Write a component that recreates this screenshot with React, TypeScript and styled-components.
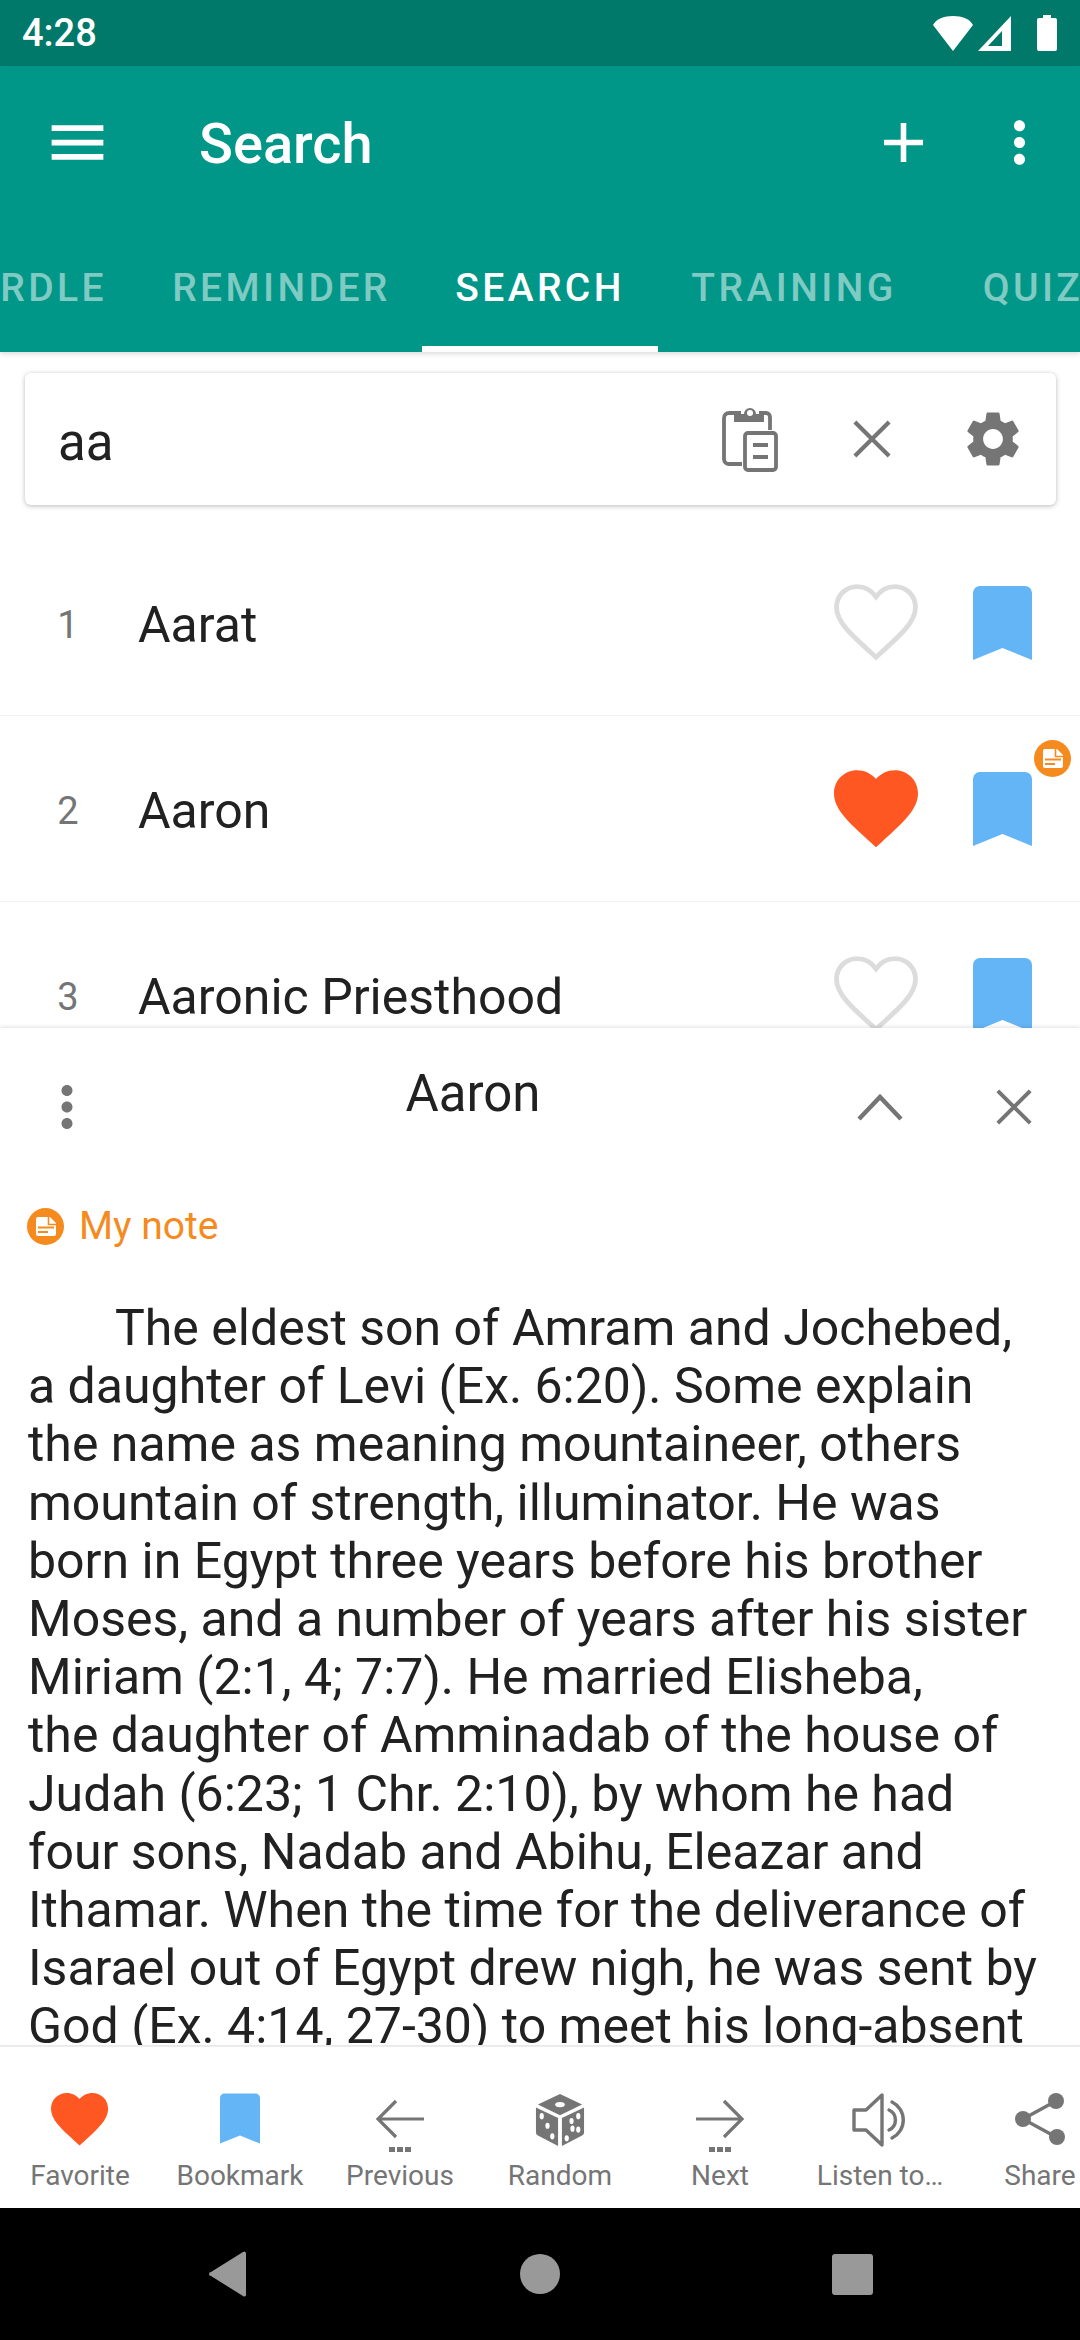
import React from "react";
import styled, { createGlobalStyle } from "styled-components";

const GlobalStyle = createGlobalStyle`
  html, body {
    margin: 0;
    padding: 0;
    background: #fff;
  }
  * {
    box-sizing: border-box;
  }
`;

const Screen = styled.div`
  width: 1080px;
  height: 2340px;
  display: flex;
  flex-direction: column;
  overflow: hidden;
  background: #fff;
  font-family: Roboto, "Noto Sans", sans-serif;
  color: #212121;
`;

const StatusBar = styled.div`
  height: 66px;
  flex: none;
  display: flex;
  align-items: center;
  justify-content: space-between;
  padding: 0 23px 0 22px;
  background: #00796b;
  color: #fff;
  font-size: 38px;
  font-weight: 500;
`;

const StatusIcons = styled.div`
  display: flex;
  align-items: center;
  gap: 5px;

  > svg:last-child {
    margin-left: 21px;
  }
`;

const AppBar = styled.header`
  flex: none;
  background: #009688;
  color: #fff;
  position: relative;
  z-index: 2;
  box-shadow: 0 2px 5px rgba(0, 0, 0, 0.14);
`;

const Toolbar = styled.div`
  height: 154px;
  display: flex;
  align-items: center;
  padding-bottom: 2px;
  padding-right: 3px;
`;

const BarButton = styled.div<{ $w: number }>`
  width: ${(p) => p.$w}px;
  flex: none;
  display: flex;
  align-items: center;
  justify-content: center;
`;

const Title = styled.h1`
  flex: 1;
  margin: 0 0 0 45px;
  font-size: 56px;
  font-weight: 500;
  padding-top: 4px;
`;

const Tabs = styled.nav`
  height: 132px;
  display: flex;
  overflow: hidden;
`;

const Tab = styled.div<{ $active?: boolean; $w: number; $cut?: boolean }>`
  width: ${(p) => p.$w}px;
  flex: none;
  display: flex;
  align-items: center;
  justify-content: ${(p) => (p.$cut ? "flex-end" : "center")};
  padding: 9px ${(p) => (p.$cut ? "34px" : "0")} 0 0;
  font-size: 39px;
  font-weight: 500;
  letter-spacing: 3.4px;
  white-space: nowrap;
  color: ${(p) => (p.$active ? "#fff" : "rgba(255, 255, 255, 0.5)")};
  border-bottom: 6px solid ${(p) => (p.$active ? "#fff" : "transparent")};
`;

const ListArea = styled.main`
  flex: 1;
  min-height: 0;
  overflow: hidden;
  padding-top: 21px;
  background: #fff;
`;

const SearchCard = styled.div`
  height: 132px;
  margin: 0 24px 25px 25px;
  display: flex;
  align-items: center;
  border-radius: 6px;
  background: #fff;
  box-shadow: 0 1px 5px rgba(0, 0, 0, 0.28);
`;

const SearchText = styled.div`
  flex: 1;
  padding: 6px 0 0 33px;
  font-size: 51px;
`;

const Row = styled.div`
  height: 186px;
  display: flex;
  align-items: center;
  border-bottom: 1px solid #f2f2f2;
`;

const RowNumber = styled.div`
  width: 138px;
  flex: none;
  padding: 5px 2px 0 0;
  text-align: center;
  font-size: 38px;
  color: #757575;
`;

const RowName = styled.div`
  flex: 1;
  padding-top: 5px;
  font-size: 50px;
`;

const RowIcon = styled.div<{ $w: number }>`
  position: relative;
  width: ${(p) => p.$w}px;
  flex: none;
  display: flex;
  justify-content: center;
  margin-top: 1px;
`;

const NoteBadge = styled.div`
  position: absolute;
  top: -32px;
  right: -5px;
  display: flex;
`;

const Panel = styled.section`
  height: 1017px;
  flex: none;
  display: flex;
  flex-direction: column;
  overflow: hidden;
  position: relative;
  background: #fff;
  box-shadow: 0 -1px 4px rgba(0, 0, 0, 0.12);
`;

const PanelHeader = styled.div`
  height: 156px;
  flex: none;
  display: flex;
  padding-top: 2px;
  align-items: center;
`;

const PanelTitle = styled.div`
  flex: 1;
  text-align: center;
  font-size: 51px;
  margin-top: -28px;
`;

const NoteLink = styled.div`
  flex: none;
  display: flex;
  align-items: center;
  gap: 15px;
  height: 84px;
  padding-left: 27px;
  color: #f58b1f;
  font-size: 39px;
`;

const Article = styled.article`
  flex: 1;
  min-height: 0;
  overflow: hidden;
  padding: 31px 0 0 28px;
  font-size: 50px;
  line-height: 58.2px;
  color: #212121;
`;

const ArticleLine = styled.div<{ $indent?: boolean }>`
  white-space: nowrap;
  padding-left: ${(p) => (p.$indent ? "87px" : "0")};
`;

const BottomBar = styled.div`
  height: 163px;
  flex: none;
  display: grid;
  grid-template-columns: repeat(7, 160px);
  overflow: hidden;
  background: #fff;
  border-top: 2px solid #f0f0f0;
`;

const BottomItem = styled.div`
  display: flex;
  flex-direction: column;
  align-items: center;
  padding-top: 46px;
  color: #757575;
  font-size: 28px;
  white-space: nowrap;
`;

const BottomIcon = styled.div`
  height: 60px;
  display: flex;
  align-items: flex-start;
  justify-content: center;
`;

const BottomLabel = styled.div`
  margin-top: 5px;
  line-height: 36px;
`;

const NavBar = styled.div`
  height: 132px;
  flex: none;
  background: #000;
  display: flex;
  align-items: center;
  justify-content: center;
`;

const NavCell = styled.div`
  width: 312px;
  display: flex;
  justify-content: center;
`;

const GREY = "#757575";

const MoreIcon = ({ fill, size }: { fill: string; size: number }) => (
  <svg width={size} height={size} viewBox="0 0 24 24" fill={fill}>
    <path d="M12 8c1.1 0 2-.9 2-2s-.9-2-2-2-2 .9-2 2 .9 2 2 2zm0 2c-1.1 0-2 .9-2 2s.9 2 2 2 2-.9 2-2-.9-2-2-2zm0 6c-1.1 0-2 .9-2 2s.9 2 2 2 2-.9 2-2-.9-2-2-2z" />
  </svg>
);

const CloseIcon = ({ size }: { size: number }) => (
  <svg width={size} height={size} viewBox="0 0 40 40" stroke={GREY} strokeWidth="4.4" fill="none">
    <path d="M2 2l36 36M38 2L2 38" />
  </svg>
);

const GearIcon = () => (
  <svg width="66" height="66" viewBox="0 0 24 24" fill={GREY}>
    <path d="M19.14 12.94c.04-.3.06-.61.06-.94 0-.32-.02-.64-.07-.94l2.03-1.58c.18-.14.23-.41.12-.61l-1.92-3.32c-.12-.22-.37-.29-.59-.22l-2.39.96c-.5-.38-1.03-.7-1.62-.94l-.36-2.54c-.04-.24-.24-.41-.48-.41h-3.84c-.24 0-.43.17-.47.41l-.36 2.54c-.59.24-1.13.57-1.62.94l-2.39-.96c-.22-.08-.47 0-.59.22L2.74 8.87c-.12.21-.08.47.12.61l2.03 1.58c-.05.3-.09.63-.09.94s.02.64.07.94l-2.03 1.58c-.18.14-.23.41-.12.61l1.92 3.32c.12.22.37.29.59.22l2.39-.96c.5.38 1.03.7 1.62.94l.36 2.54c.05.24.24.41.48.41h3.84c.24 0 .44-.17.47-.41l.36-2.54c.59-.24 1.13-.56 1.62-.94l2.39.96c.22.08.47 0 .59-.22l1.92-3.32c.12-.22.07-.47-.12-.61l-2.01-1.58zM12 15.6c-1.98 0-3.6-1.62-3.6-3.6s1.62-3.6 3.6-3.6 3.6 1.62 3.6 3.6-1.62 3.6-3.6 3.6z" />
  </svg>
);

const ClipboardIcon = () => (
  <svg width="56" height="66" viewBox="0 0 56 66" fill="none" stroke={GREY} strokeWidth="3.8">
    <path d="M19 7H7a5 5 0 0 0-5 5v41a5 5 0 0 0 5 5h13M37 7h7a4 4 0 0 1 4 4v13" />
    <path d="M12 16V8h10a6 6 0 0 1 12 0h8v8z" fill={GREY} stroke="none" />
    <circle cx="28" cy="7" r="3" fill="#fff" stroke="none" />
    <rect x="23" y="27" width="31" height="37" rx="3" />
    <path d="M31 39h15M31 51h15" />
  </svg>
);

const HeartPath =
  "M12 21.35l-1.45-1.32C5.4 15.36 2 12.28 2 8.5 2 5.42 4.42 3 7.5 3c1.74 0 3.41.81 4.5 2.09C13.09 3.81 14.76 3 16.5 3 19.58 3 22 5.42 22 8.5c0 3.78-3.4 6.86-8.55 11.54L12 21.35z";

const HeartIcon = ({ filled, size }: { filled?: boolean; size: number }) => (
  <svg
    width={size * 0.84}
    height={size * 0.78}
    viewBox="2 3 20 18.5"
    style={{ overflow: "visible", display: "block" }}
  >
    {filled ? (
      <path d={HeartPath} fill="#ff5722" />
    ) : (
      <path
        d="M12 20.4l-1.1-1C5.9 14.9 2.6 11.9 2.6 8.5c0-2.8 2.2-4.9 4.9-4.9 1.7 0 3.4.9 4.5 2.4 1.1-1.5 2.8-2.4 4.5-2.4 2.7 0 4.9 2.1 4.9 4.9 0 3.4-3.3 6.4-8.3 10.9z"
        fill="none"
        stroke="#dcdcdc"
        strokeWidth="1.15"
      />
    )}
  </svg>
);

const BookmarkIcon = ({ w, h }: { w: number; h: number }) => (
  <svg width={w} height={h} viewBox="0 0 59 74" fill="#64b5f6" style={{ display: "block" }}>
    <path d="M0 7a7 7 0 0 1 7-7h45a7 7 0 0 1 7 7v67L29.5 62 0 74z" />
  </svg>
);

const NoteIcon = ({ size }: { size: number }) => (
  <svg width={size} height={size} viewBox="0 0 37 37" style={{ display: "block" }}>
    <circle cx="18.5" cy="18.5" r="18.5" fill="#f58b1f" />
    <path d="M9 11a2 2 0 0 1 2-2h12l6 6v11a2 2 0 0 1-2 2H11a2 2 0 0 1-2-2z" fill="#fff" />
    <path d="M21.5 9v7.5H29" fill="none" stroke="#f58b1f" strokeWidth="1.6" />
    <path d="M11 19.5h16M11 24h10" stroke="#f58b1f" strokeWidth="2.2" />
  </svg>
);

const ArrowIcon = ({ flip }: { flip?: boolean }) => (
  <svg width="52" height="60" viewBox="0 -6 52 60" fill="none" stroke={GREY} style={{ display: "block" }}>
    <g transform={flip ? "translate(52 0) scale(-1 1)" : undefined} strokeWidth="3.2">
      <path d="M50 20H5M22 2L4 20l18 18" />
    </g>
    <path d="M15 48h6v5h-6zM23 48h6v5h-6zM31 48h6v5h-6z" fill={GREY} stroke="none" />
  </svg>
);

const DiceIcon = () => (
  <svg width="50" height="54" viewBox="0 0 52 56" fill={GREY} style={{ display: "block" }}>
    <path d="M26 1l23 11-23 11L3 12z" />
    <path d="M1 15l23 11v29L3 44a3 3 0 0 1-2-3z" />
    <path d="M51 15L28 26v29l21-11a3 3 0 0 0 2-3z" />
    <ellipse cx="26" cy="12" rx="5" ry="2.8" fill="#fff" />
    <ellipse cx="7" cy="24" rx="2.2" ry="3.2" fill="#fff" />
    <ellipse cx="13" cy="34" rx="2.2" ry="3.2" fill="#fff" />
    <ellipse cx="18" cy="45" rx="2.2" ry="3.2" fill="#fff" />
    <ellipse cx="45" cy="24" rx="2.2" ry="3.2" fill="#fff" />
    <ellipse cx="38" cy="29" rx="2.2" ry="3.2" fill="#fff" />
    <ellipse cx="39" cy="37" rx="2.2" ry="3.2" fill="#fff" />
    <ellipse cx="33" cy="47" rx="2.2" ry="3.2" fill="#fff" />
    <ellipse cx="45" cy="38" rx="2.2" ry="3.2" fill="#fff" />
  </svg>
);

const SpeakerIcon = () => (
  <svg width="56" height="54" viewBox="0 0 56 54" fill="none" stroke={GREY} strokeWidth="3.4" strokeLinejoin="round" strokeLinecap="round" style={{ display: "block" }}>
    <path d="M30 2v50L14 37H2V17h12z" />
    <path d="M37 17a11 11 0 0 1 0 20M40 9a20 20 0 0 1 0 36" />
  </svg>
);

const ShareIcon = () => (
  <svg width="50" height="52" viewBox="0 0 50 52" fill={GREY} style={{ display: "block" }}>
    <path d="M8 26L41 8M8 26l33 18" stroke={GREY} strokeWidth="3.4" />
    <circle cx="8" cy="26" r="8" />
    <circle cx="41" cy="8" r="8" />
    <circle cx="42" cy="44" r="8" />
  </svg>
);

const rows = [
  { n: 1, name: "Aarat" },
  { n: 2, name: "Aaron", fav: true, note: true },
  { n: 3, name: "Aaronic Priesthood" },
];

const articleLines = [
  "The eldest son of Amram and Jochebed,",
  "a daughter of Levi (Ex. 6:20). Some explain",
  "the name as meaning mountaineer, others",
  "mountain of strength, illuminator. He was",
  "born in Egypt three years before his brother",
  "Moses, and a number of years after his sister",
  "Miriam (2:1, 4; 7:7). He married Elisheba,",
  "the daughter of Amminadab of the house of",
  "Judah (6:23; 1 Chr. 2:10), by whom he had",
  "four sons, Nadab and Abihu, Eleazar and",
  "Ithamar. When the time for the deliverance of",
  "Isarael out of Egypt drew nigh, he was sent by",
  "God (Ex. 4:14, 27-30) to meet his long-absent",
];

const bottomItems = [
  { label: "Favorite", icon: <HeartIcon filled size={68} /> },
  { label: "Bookmark", icon: <BookmarkIcon w={40} h={51} /> },
  { label: "Previous", icon: <ArrowIcon /> },
  { label: "Random", icon: <DiceIcon /> },
  { label: "Next", icon: <ArrowIcon flip /> },
  { label: "Listen to…", icon: <SpeakerIcon /> },
  { label: "Share", icon: <ShareIcon /> },
];

const App = () => {
  return (
    <Screen>
      <GlobalStyle />
      <StatusBar>
        <span>4:28</span>
        <StatusIcons>
          <svg width="40" height="35" viewBox="0 0 40 35" fill="#fff">
            <path d="M0 9C3 3 11 0 20 0s17 3 20 9L20 35z" />
          </svg>
          <svg width="33" height="35" viewBox="0 0 33 35">
            <path d="M33 0v35H0z" fill="#fff" />
            <path d="M24 15v15H10z" fill="#00796b" />
          </svg>
          <svg width="20" height="36" viewBox="0 0 20 36" fill="#fff">
            <path d="M6 0h8v3h4a2 2 0 0 1 2 2v29a2 2 0 0 1-2 2H2a2 2 0 0 1-2-2V5a2 2 0 0 1 2-2h4z" />
          </svg>
        </StatusIcons>
      </StatusBar>

      <AppBar>
        <Toolbar>
          <BarButton $w={154}>
            <svg width="69" height="69" viewBox="0 0 24 24" fill="#fff">
              <path d="M3 18h18v-2H3v2zm0-5h18v-2H3v2zm0-7v2h18V6H3z" />
            </svg>
          </BarButton>
          <Title>Search</Title>
          <BarButton $w={116}>
            <svg width="67" height="67" viewBox="0 0 24 24" fill="#fff">
              <path d="M19 13h-6v6h-2v-6H5v-2h6V5h2v6h6v2z" />
            </svg>
          </BarButton>
          <BarButton $w={116}>
            <MoreIcon fill="#fff" size={67} />
          </BarButton>
        </Toolbar>
        <Tabs>
          <Tab $w={141} $cut>RDLE</Tab>
          <Tab $w={281}>REMINDER</Tab>
          <Tab $w={236} $active>SEARCH</Tab>
          <Tab $w={272}>TRAINING</Tab>
          <Tab $w={206}>QUIZ</Tab>
        </Tabs>
      </AppBar>

      <ListArea>
        <SearchCard>
          <SearchText>aa</SearchText>
          <BarButton $w={122}>
            <ClipboardIcon />
          </BarButton>
          <BarButton $w={122}>
            <CloseIcon size={38} />
          </BarButton>
          <BarButton $w={120}>
            <GearIcon />
          </BarButton>
          <BarButton $w={3} />
        </SearchCard>
        {rows.map((row) => (
          <Row key={row.n}>
            <RowNumber>{row.n}</RowNumber>
            <RowName>{row.name}</RowName>
            <RowIcon $w={127}>
              <HeartIcon filled={row.fav} size={100} />
            </RowIcon>
            <RowIcon $w={127}>
              <BookmarkIcon w={59} h={74} />
              {row.note && (
                <NoteBadge>
                  <NoteIcon size={37} />
                </NoteBadge>
              )}
            </RowIcon>
            <RowIcon $w={14} />
          </Row>
        ))}
      </ListArea>

      <Panel>
        <PanelHeader>
          <BarButton $w={134}>
            <MoreIcon fill={GREY} size={66} />
          </BarButton>
          <PanelTitle>Aaron</PanelTitle>
          <BarButton $w={136}>
            <svg width="46" height="28" viewBox="0 0 46 28" fill="none" stroke={GREY} strokeWidth="4.4">
              <path d="M2 26L23 4l21 22" />
            </svg>
          </BarButton>
          <BarButton $w={132}>
            <CloseIcon size={36} />
          </BarButton>
        </PanelHeader>
        <NoteLink>
          <NoteIcon size={37} />
          <span>My note</span>
        </NoteLink>
        <Article>
          {articleLines.map((line, i) => (
            <ArticleLine key={line} $indent={i === 0}>
              {line}
            </ArticleLine>
          ))}
        </Article>
      </Panel>

      <BottomBar>
        {bottomItems.map((item) => (
          <BottomItem key={item.label}>
            <BottomIcon>{item.icon}</BottomIcon>
            <BottomLabel>{item.label}</BottomLabel>
          </BottomItem>
        ))}
      </BottomBar>

      <NavBar>
        <NavCell>
          <svg width="38" height="46" viewBox="0 0 38 46" fill="#999">
            <path d="M37 2v42a2 2 0 0 1-3 1L2 25a2 2 0 0 1 0-4L34 1a2 2 0 0 1 3 1z" />
          </svg>
        </NavCell>
        <NavCell>
          <svg width="40" height="40" viewBox="0 0 40 40" fill="#999">
            <circle cx="20" cy="20" r="20" />
          </svg>
        </NavCell>
        <NavCell>
          <svg width="41" height="41" viewBox="0 0 41 41" fill="#999">
            <rect width="41" height="41" rx="3" />
          </svg>
        </NavCell>
      </NavBar>
    </Screen>
  );
};

export default App;
